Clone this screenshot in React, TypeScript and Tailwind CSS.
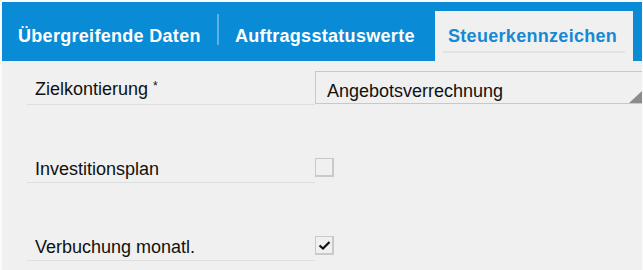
import React from 'react';

type Tab = {
  label: string;
  width: string;
  active?: boolean;
};

const tabs: Tab[] = [
  { label: 'Übergreifende Daten', width: 'w-[215px]' },
  { label: 'Auftragsstatuswerte', width: 'w-[216px]' },
  { label: 'Steuerkennzeichen', width: 'w-[198px]', active: true },
];

function Checkbox({ checked }: { checked?: boolean }) {
  return (
    <div className="flex h-[19px] w-[19px] items-center justify-center border border-[#c9c9c9] border-r-2 border-b-2 bg-[#f0f0f0]">
      {checked && (
        <svg width="13" height="11" viewBox="0 0 13 11">
          <path d="M1.5 5.5 L5 8.5 L11.5 2" fill="none" stroke="#111" strokeWidth="2.2" />
        </svg>
      )}
    </div>
  );
}

function FieldRow({ label, children }: { label: React.ReactNode; children: React.ReactNode }) {
  return (
    <div className="flex h-[34px] items-stretch">
      <div className="flex w-[288px] items-end border-b border-[#dedede] pb-[3px] pl-2 text-[18px] leading-[20px] text-[#111]">
        {label}
      </div>
      <div className="flex flex-1 items-center">{children}</div>
    </div>
  );
}

export default function App() {
  return (
    <div className="h-[270px] w-[643px] overflow-hidden border-t-2 border-l-2 border-r border-[#fafafa] bg-[#f0f0f0] font-['Liberation_Sans',Arial,sans-serif]">
      <div className="flex h-[59px] items-end bg-[#0a8bd6]">
        {tabs.map((tab, i) => (
          <div key={tab.label} className="flex h-[50px] items-center">
            {i === 1 && <div className="mb-[16px] h-[31px] w-[2px] self-end bg-[#5cb1e6]" />}
            <div
              className={
                tab.active
                  ? `relative flex h-[50px] ${tab.width} items-center bg-[#f0f0f0] pl-[13px] text-[18px] font-bold text-[#1689d4]`
                  : `flex h-[50px] ${tab.width} items-center pl-4 text-[18px] font-bold text-white`
              }
            >
              <span className="tracking-[0.3px]">{tab.label}</span>
              {tab.active && (
                <div className="absolute bottom-[8px] left-[8px] right-[8px] h-[2px] bg-[#e3e3e3]" />
              )}
            </div>
          </div>
        ))}
      </div>

      <div className="flex flex-col gap-[44px] pl-[25px] pt-[10px]">
        <FieldRow
          label={
            <span>
              Zielkontierung <span className="relative -top-[5px] text-[12px]">*</span>
            </span>
          }
        >
          <div className="relative -mr-[4px] flex h-[33px] flex-1 items-end self-start border border-[#c8c8c8] pb-[2px] pl-[11px] text-[18px] leading-[20px] text-[#111]">
            Angebotsverrechnung
            <svg className="absolute bottom-0 right-[3px]" width="13" height="12" viewBox="0 0 13 12">
              <polygon points="13,0 13,12 0,12" fill="#8a8c8f" />
            </svg>
          </div>
        </FieldRow>

        <FieldRow label="Investitionsplan">
          <div className="mt-[3px]">
            <Checkbox />
          </div>
        </FieldRow>

        <FieldRow label="Verbuchung monatl.">
          <div className="mt-[3px]">
            <Checkbox checked />
          </div>
        </FieldRow>
      </div>
    </div>
  );
}
